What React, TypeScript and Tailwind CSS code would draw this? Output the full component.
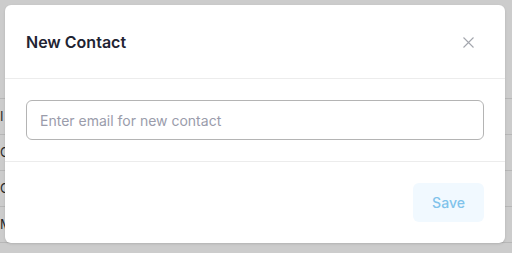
import React, { useState } from "react";

const rows = ["I", "C", "C", "M"];

const NewContactModal = () => {
  const [email, setEmail] = useState("");

  return (
    <div className="flex h-[238px] w-[500px] flex-col rounded-md bg-white shadow-sm">
      <div className="flex h-[74px] items-center justify-between border-b border-[#ececec] px-[21px]">
        <h3 className="pt-[1px] text-[16px] font-semibold text-[#1f2433]">New Contact</h3>
        <button className="mr-[8px] mt-[2px] flex h-4 w-4 items-center justify-center text-[#a3a6ad]">
          <svg width="11" height="11" viewBox="0 0 11 11" fill="none" stroke="currentColor" strokeWidth="1.1">
            <path d="M0.5 0.5 L10.5 10.5 M10.5 0.5 L0.5 10.5" />
          </svg>
        </button>
      </div>

      <div className="border-b border-[#ececec] px-[21px] py-[21px]">
        <input
          type="email"
          autoFocus
          placeholder="Enter email for new contact"
          className="h-10 w-full rounded-md border border-[#b4b4b4] px-[13px] text-[14px] text-[#1f2433] placeholder-[#9a9cab] outline-none caret-[#1f2433]"
          value={email}
          onChange={e => setEmail(e.target.value)}
        />
      </div>

      <div className="flex flex-1 items-start justify-end px-[21px] pt-[21px]">
        <button className="h-[39px] w-[71px] rounded-md bg-[#f1f9ff] text-[14px] font-medium text-[#80c3eb]">
          Save
        </button>
      </div>
    </div>
  );
};

const App = () => {
  return (
    <div
      className="relative h-[253px] w-[512px] overflow-hidden bg-white"
      style={{ fontFamily: "Inter, 'Noto Sans', sans-serif" }}
    >
      {/* page behind the dialog */}
      <div className="flex flex-col pt-[50px]">
        <div className="h-[49px] border-b border-[#e5e5e5]" />
        {rows.map((r, i) => (
          <div key={i} className="flex h-[36px] items-center border-b border-[#e5e5e5] text-[13px] text-[#333]">
            <span>{r}</span>
          </div>
        ))}
      </div>

      {/* overlay */}
      <div className="absolute inset-0 bg-black/20 p-[5px]">
        <NewContactModal />
      </div>
    </div>
  );
};

export default App;
